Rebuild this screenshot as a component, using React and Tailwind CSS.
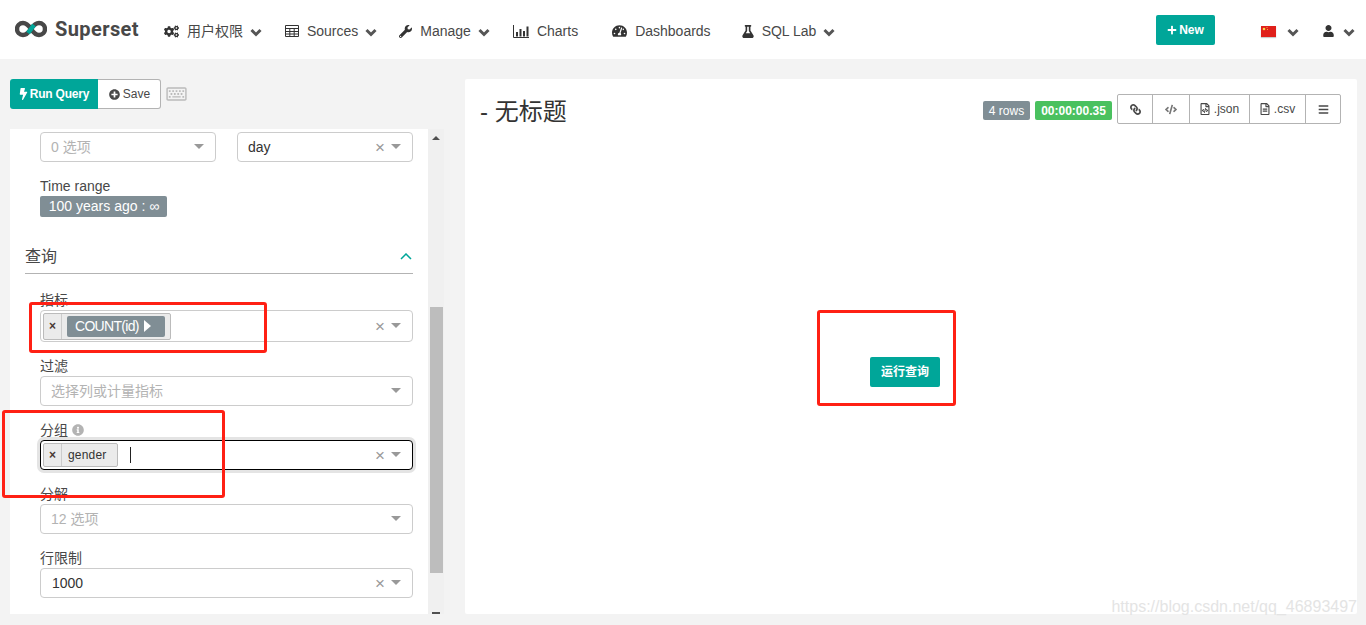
import {
  FaBars,
  FaBolt,
  FaCogs,
  FaFlask,
  FaInfoCircle,
  FaLink,
  FaPlus,
  FaPlusCircle,
  FaRegFileAlt,
  FaRegFileCode,
  FaRegKeyboard,
  FaTachometerAlt,
  FaUser,
  FaWrench,
  FaCode,
} from "react-icons/fa";

const FONT = "font-['Liberation_Sans','Noto_Sans_CJK_SC',sans-serif]";

function Logo() {
  return (
    <svg viewBox="0 0 32 18" className="w-[32px] h-[18px]">
      <path
        d="M16 9 C13 4.5 11 3 8 3 a6 6 0 0 0 0 12 c3 0 5 -1.500 8 -6 c3 -4.500 5 -6 8 -6 a6 6 0 0 1 0 12 c-3 0 -5 -1.500 -8 -6 Z"
        fill="none"
        stroke="#484848"
        strokeWidth="4.5"
      />
      <path d="M13 13 L19 5" stroke="#00a699" strokeWidth="4.5" />
    </svg>
  );
}

// the old font-awesome chevron is heavier than the one in the icon packs
function Chevron({ className = "" }) {
  return (
    <svg viewBox="0 0 12 9" className={`w-[12px] h-[9px] ${className}`}>
      <path d="M1.500 2 L6 6.500 L10.500 2" fill="none" stroke="#555" strokeWidth="3" />
    </svg>
  );
}

function TableIcon() {
  return (
    <svg viewBox="0 0 14 12" className="w-[14px] h-[12px]">
      <path
        d="M.5 .5 H13.500 V11.500 H.5 Z M.5 3.500 H13.500 M.5 6.500 H13.500 M.5 9 H13.500 M4.800 3.500 V11.500 M9.200 3.500 V11.500"
        fill="none"
        stroke="#333"
        strokeWidth="1"
      />
    </svg>
  );
}

function BarChartIcon() {
  return (
    <svg viewBox="0 0 16 13" className="w-[16px] h-[13px]">
      <path d="M.5 0 V12.500 H16" fill="none" stroke="#333" strokeWidth="1" />
      <path d="M3 7 h2 v4.500 h-2 Z M6.500 4 h2 v7.500 h-2 Z M10 6 h2 v5.500 h-2 Z M13.500 1.500 h2 v10 h-2 Z" fill="#333" />
    </svg>
  );
}

function NavItem({ icon, label, chevron, className }) {
  return (
    <div className={`flex items-center mt-[3px] ${className}`}>
      {icon}
      <span className="ml-[8px] text-[14px] text-[#484848]">{label}</span>
      {chevron && <Chevron className="ml-[7px] mt-[3px]" />}
    </div>
  );
}

function Caret() {
  return <span className="w-0 h-0 border-x-[5px] border-x-transparent border-t-[5px] border-t-[#999]" />;
}

// react-select style box
function Select({ children, clear, focus, height = "h-[30px]", className = "" }) {
  return (
    <div
      className={`flex items-center bg-white rounded-[4px] border ${height} ${className} ${
        focus ? "border-black shadow-[0_0_0_3px_#e4e4e4]" : "border-[#ccc]"
      }`}
    >
      <div className="flex-1 min-w-0 flex items-center text-[14px]">{children}</div>
      {clear && <span className="text-[17px] leading-none text-[#999] mr-[6px]">×</span>}
      <span className="mr-[11px] mb-[2px] flex"><Caret /></span>
    </div>
  );
}

function Field({ label, info, children }) {
  return (
    <div className="mt-[14px]">
      <div className="h-[20px] flex items-center gap-[4px] text-[14px] text-[#484848]">
        {label}
        {info && <FaInfoCircle className="w-[12px] h-[12px] text-[#b3b3b3]" />}
      </div>
      {children}
    </div>
  );
}

function Placeholder({ children }) {
  return <span className="pl-[10px] text-[#b3b3b3]">{children}</span>;
}

function Remove() {
  return (
    <span className="w-[18px] h-full flex items-center justify-center border-r border-[#ccc] text-[12px] font-bold text-[#4a3a34]">
      ×
    </span>
  );
}

function ToolButton({ children, className = "" }) {
  return (
    <div className={`h-full flex items-center justify-center gap-[4px] border-r border-[#b3b3b3] last:border-r-0 text-[12px] text-[#484848] ${className}`}>
      {children}
    </div>
  );
}

function Flag() {
  return (
    <svg viewBox="0 0 15 11" className="w-[15px] h-[11px] shadow-[0_1px_1px_#ccc]">
      <rect width="15" height="11" fill="#e0201b" />
      <circle cx="3" cy="3" r="1.300" fill="#f7d84a" />
      <circle cx="6" cy="1.500" r="0.500" fill="#f7d84a" />
      <circle cx="6.500" cy="3.500" r="0.500" fill="#f7d84a" />
    </svg>
  );
}

function Annotation({ className }) {
  return <div className={`absolute border-[3px] border-[#ff2014] rounded-[3px] pointer-events-none ${className}`} />;
}

export default function App() {
  return (
    <div className={`relative w-[1366px] h-[625px] overflow-hidden bg-[#f3f3f3] ${FONT}`}>
      {/* Nav */}
      <div className="h-[59px] bg-white flex items-center relative">
        <div className="ml-[15px] flex items-center mb-[2px]">
          <Logo />
          <span className="ml-[8px] font-['Roboto',sans-serif] font-bold text-[20px] tracking-[0.4px] text-[#484848]">Superset</span>
        </div>
        <NavItem className="ml-[25px]" icon={<FaCogs className="w-[15px] h-[15px] text-[#333]" />} label="用户权限" chevron />
        <NavItem className="ml-[23px]" icon={<TableIcon />} label="Sources" chevron />
        <NavItem className="ml-[22px]" icon={<FaWrench className="w-[13px] h-[13px] text-[#333]" />} label="Manage" chevron />
        <NavItem className="ml-[23px]" icon={<BarChartIcon />} label="Charts" />
        <NavItem className="ml-[34px]" icon={<FaTachometerAlt className="w-[15px] h-[14px] text-[#333]" />} label="Dashboards" />
        <NavItem className="ml-[31px]" icon={<FaFlask className="w-[12px] h-[13px] text-[#333]" />} label="SQL Lab" chevron />
        <div className="ml-auto flex items-center">
          <div className="w-[59px] h-[30px] mt-[1px] rounded-[2px] bg-[#00a699] text-white text-[12px] font-bold flex items-center justify-center gap-[2px]">
            <FaPlus className="w-[10px] h-[10px]" />
            New
          </div>
          <div className="ml-[46px] flex items-center mt-[3px]">
            <Flag />
            <Chevron className="ml-[11px] mt-[3px]" />
          </div>
          <div className="ml-[24px] mr-[11px] flex items-center mt-[3px]">
            <FaUser className="w-[11px] h-[12px] text-[#333]" />
            <Chevron className="ml-[9px] mt-[3px]" />
          </div>
        </div>
      </div>

      <div className="flex pt-[20px]">
        {/* Left column */}
        <div className="ml-[10px] w-[434px]">
          <div className="flex items-center h-[30px]">
            <div className="w-[88px] h-[30px] rounded-l-[3px] bg-[#00a699] text-white text-[12px] font-bold tracking-[-0.2px] flex items-center justify-center gap-[2px]">
              <FaBolt className="w-[9px] h-[12px]" />
              Run Query
            </div>
            <div className="w-[63px] h-[30px] pl-[1px] rounded-r-[3px] bg-white border border-[#b3b3b3] border-l-0 text-[12px] text-[#484848] flex items-center justify-center gap-[3px]">
              <FaPlusCircle className="w-[11px] h-[11px]" />
              Save
            </div>
            <FaRegKeyboard className="ml-[5px] w-[21px] h-[18px] text-[#bbb]" />
          </div>

          <div className="mt-[20px] flex h-[485px]">
            <div className="w-[418px] bg-white overflow-hidden pl-[30px] pr-[15px] pt-[3px]">
              <div className="flex justify-between">
                <Select className="w-[176px]">
                  <Placeholder>0 选项</Placeholder>
                </Select>
                <Select clear className="w-[176px]">
                  <span className="pl-[10px] text-[#333]">day</span>
                </Select>
              </div>
              <div className="mt-[14px] h-[20px] flex items-center text-[14px] text-[#484848]">Time range</div>
              <div className="w-[127px] h-[21px] pl-[1px] rounded-[2px] bg-[#808e95] text-white text-[14px] flex items-center justify-center">
                100 years ago : ∞
              </div>

              {/* Query section */}
              <div className="-ml-[15px] mt-[22px] h-[35px] border-b border-[#b3b3b3] flex items-center justify-between">
                <span className="mt-[1px] text-[16px] text-[#484848]">查询</span>
                <svg viewBox="0 0 12 7" className="w-[12px] h-[7px] mr-[1px]">
                  <path d="M1 6 L6 1 L11 6" fill="none" stroke="#00a699" strokeWidth="1.500" />
                </svg>
              </div>

              <div className="pt-[2px]">
                <Field label="指标">
                  <Select clear height="h-[32px]">
                    <div className="ml-[2px] h-[27px] flex items-center rounded-[2px] border border-[#bbb] bg-[#ebebeb]">
                      <Remove />
                      <div className="mx-[5px] w-[98px] h-[21px] pl-[8px] rounded-[2px] bg-[#808e95] text-white text-[14px] tracking-[-0.7px] flex items-center gap-[5px]">
                        COUNT(id)
                        <span className="w-0 h-0 border-y-[6px] border-y-transparent border-l-[7px] border-l-white" />
                      </div>
                    </div>
                  </Select>
                </Field>
                <Field label="过滤">
                  <Select>
                    <Placeholder>选择列或计量指标</Placeholder>
                  </Select>
                </Field>
                <Field label="分组" info>
                  <Select clear focus>
                    <div className="ml-[2px] h-[24px] flex items-center rounded-[2px] border border-[#bbb] bg-[#ebebeb]">
                      <Remove />
                      <span className="pl-[6px] w-[55px] mb-[1px] text-[12px] tracking-[0.2px] text-[#333]">gender</span>
                    </div>
                    <span className="ml-[12px] w-px h-[16px] bg-[#222]" />
                  </Select>
                </Field>
                <Field label="分解">
                  <Select>
                    <Placeholder>12 选项</Placeholder>
                  </Select>
                </Field>
                <Field label="行限制">
                  <Select clear>
                    <span className="pl-[11px] text-[#333]">1000</span>
                  </Select>
                </Field>
              </div>
            </div>

            {/* Scrollbar */}
            <div className="w-[16px] bg-[#f0f0f0] flex flex-col">
              <div className="h-[18px] flex items-center justify-center">
                <span className="w-0 h-0 border-x-[4px] border-x-transparent border-b-[4px] border-b-[#505050]" />
              </div>
              <div className="mt-[160px] ml-[2px] w-[13px] h-[266px] bg-[#bdbdbd]" />
              <div className="mt-auto flex justify-center">
                <span className="w-[8px] h-[2px] bg-[#505050]" />
              </div>
            </div>
          </div>
        </div>

        {/* Chart panel */}
        <div className="ml-[21px] w-[892px] h-[535px] bg-white rounded-[2px]">
          <div className="flex items-start justify-between pl-[15px] pr-[16px] pt-[15px]">
            <div className="mt-[1px] text-[24px] leading-[34px] text-[#333]">- 无标题</div>
            <div className="flex items-center">
              <div className="mt-[3px] w-[47px] h-[19px] rounded-[2px] bg-[#808e95] text-white text-[12px] flex items-center justify-center">4 rows</div>
              <div className="mt-[3px] ml-[5px] w-[77px] h-[19px] rounded-[2px] bg-[#4ac15f] text-white text-[12px] font-bold flex items-center justify-center">00:00:00.35</div>
              <div className="ml-[5px] w-[224px] h-[30px] flex items-center bg-white border border-[#b3b3b3] rounded-[2px]">
                <ToolButton className="w-[35px]"><FaLink className="w-[11px] h-[11px] -scale-x-100" /></ToolButton>
                <ToolButton className="w-[37px]"><FaCode className="w-[12px] h-[11px] text-[#777]" /></ToolButton>
                <ToolButton className="w-[60px]"><FaRegFileCode className="w-[10px] h-[12px]" />.json</ToolButton>
                <ToolButton className="w-[56px]"><FaRegFileAlt className="w-[10px] h-[12px]" />.csv</ToolButton>
                <ToolButton className="flex-1"><FaBars className="w-[11px] h-[11px]" /></ToolButton>
              </div>
            </div>
          </div>
          <div className="mt-[228px] ml-[405px] w-[70px] h-[30px] rounded-[2px] bg-[#00a699] text-white text-[12px] font-bold flex items-center justify-center">
            运行查询
          </div>
        </div>
      </div>

      {/* Red annotations drawn over the screenshot */}
      <Annotation className="left-[29px] top-[302px] w-[238px] h-[51px]" />
      <Annotation className="left-[2px] top-[410px] w-[223px] h-[88px]" />
      <Annotation className="left-[817px] top-[310px] w-[139px] h-[96px]" />

      {/* Watermark */}
      <div className="absolute right-[9px] top-[597px] text-[16px] leading-[20px] text-[#e4e4e4]">
        https://blog.csdn.net/qq_46893497
      </div>
    </div>
  );
}
